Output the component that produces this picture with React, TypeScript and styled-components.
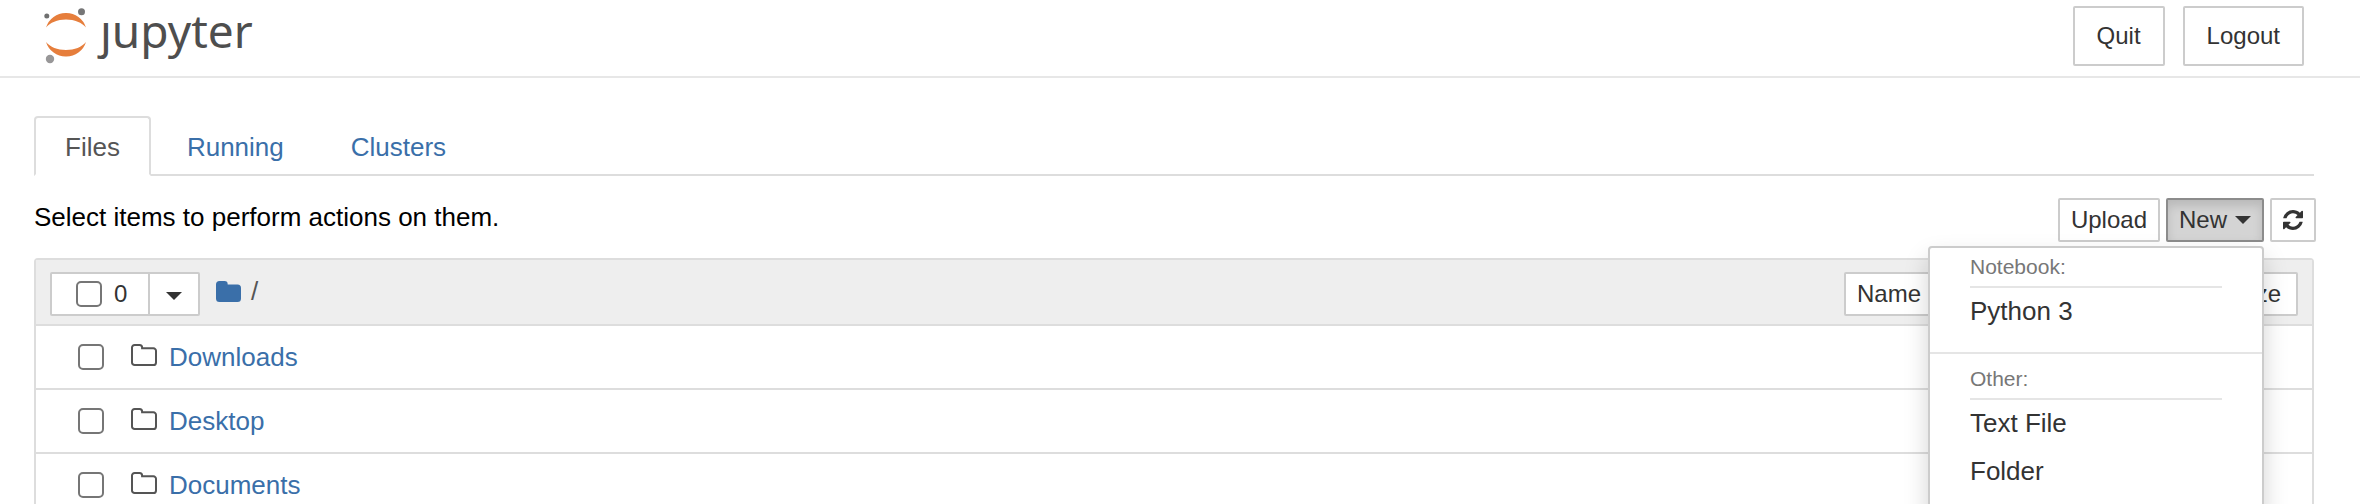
import React from "react";
import styled, { createGlobalStyle } from "styled-components";

const GlobalStyle = createGlobalStyle`
  *, *::before, *::after { box-sizing: border-box; }
  body {
    margin: 0;
    background: #fff;
    color: #000;
    font: 26px/36px "Liberation Sans", Arial, sans-serif;
  }
  button, input { font-family: inherit; margin: 0; }
`;

const Page = styled.div`
  height: 100vh;
  overflow: hidden;
`;

const Header = styled.header`
  display: flex;
  align-items: flex-start;
  justify-content: space-between;
  height: 78px;
  padding: 6px 56px 0 42px;
  border-bottom: 2px solid #e7e7e7;
`;

const Brand = styled.a`
  display: flex;
  align-items: flex-start;
  gap: 14px;
  color: #4e4e4e;
  text-decoration: none;
`;

const Wordmark = styled.span`
  font: 46px/48px "Noto Sans", sans-serif;
`;

const HeaderActions = styled.div`
  display: flex;
  gap: 18px;
`;

const Button = styled.button<{ $size?: "large" | "small"; $active?: boolean }>`
  display: flex;
  align-items: center;
  justify-content: center;
  gap: 8px;
  height: ${(p) => (p.$size === "large" ? 60 : 44)}px;
  padding: 0 ${(p) => (p.$size === "large" ? 22 : 11)}px;
  border: 2px solid ${(p) => (p.$active ? "#8c8c8c" : "#ccc")};
  border-radius: 2px;
  background: ${(p) => (p.$active ? "#d4d4d4" : "#fff")};
  box-shadow: ${(p) => (p.$active ? "inset 0 6px 10px rgba(0, 0, 0, 0.125)" : "none")};
  color: #333;
  font-size: 24px;
  line-height: 36px;
  white-space: nowrap;
`;

const SortButton = styled(Button)`
  padding-right: 15px;
`;

const Main = styled.main`
  padding: 38px 46px 0 34px;
`;

const Tabs = styled.nav`
  display: flex;
  gap: 5px;
  height: 60px;
  border-bottom: 2px solid #ddd;
`;

const Tab = styled.a<{ $active?: boolean }>`
  height: 60px;
  padding: 11px 29px;
  border: 2px solid ${(p) => (p.$active ? "#ddd" : "transparent")};
  border-bottom-color: ${(p) => (p.$active ? "#fff" : "transparent")};
  border-radius: 4px 4px 0 0;
  background: ${(p) => (p.$active ? "#fff" : "transparent")};
  color: ${(p) => (p.$active ? "#555" : "#3a6fa9")};
  text-decoration: none;
`;

const Toolbar = styled.div`
  display: flex;
  justify-content: space-between;
  padding: 22px 0 16px;
`;

const Hint = styled.p`
  margin: 0;
  line-height: 38px;
`;

const ToolbarActions = styled.div`
  display: flex;
  gap: 6px;
  margin-right: -2px;
`;

const MenuAnchor = styled.div`
  position: relative;
`;

const Menu = styled.div`
  position: absolute;
  z-index: 10;
  top: 48px;
  right: 0;
  width: 336px;
  padding: 0 0 20px;
  border: 2px solid #ccc;
  border-radius: 4px;
  background: #fff;
  box-shadow: 0 12px 24px rgba(0, 0, 0, 0.175);
`;

const MenuGroup = styled.section`
  & + & {
    margin-top: 16px;
    padding-top: 6px;
    border-top: 2px solid #e5e5e5;
  }
`;

const MenuHeading = styled.h3`
  margin: 0 40px;
  padding: 4px 0;
  border-bottom: 2px solid #e5e5e5;
  color: #777;
  font-size: 21px;
  font-weight: 400;
  line-height: 30px;
`;

const MenuItem = styled.a`
  display: block;
  padding: 5px 40px 7px;
  color: #333;
  text-decoration: none;
`;

const FileList = styled.section`
  border: 2px solid #ddd;
  border-radius: 4px;
`;

const ListHeader = styled.div`
  display: flex;
  align-items: center;
  justify-content: space-between;
  height: 64px;
  padding: 4px 14px 0;
  background: #eee;
`;

const HeaderGroup = styled.div`
  display: flex;
  align-items: center;
`;

const SelectGroup = styled.div`
  display: flex;
  height: 44px;
  margin-right: 16px;
  border: 2px solid #ccc;
  border-radius: 2px;
  background: #fff;
`;

const SelectAll = styled.label`
  display: flex;
  align-items: center;
  gap: 12px;
  width: 96px;
  padding-left: 24px;
  color: #333;
  font-size: 24px;
`;

const SelectToggle = styled.button`
  display: flex;
  align-items: center;
  justify-content: center;
  width: 50px;
  padding: 4px 0 0;
  border: 0;
  border-left: 2px solid #ccc;
  background: transparent;
`;

const Caret = styled.span`
  border: 8px solid transparent;
  border-top-color: #333;
  border-bottom: 0;
`;

const Checkbox = styled.input.attrs({ type: "checkbox" })`
  appearance: none;
  flex: none;
  width: 26px;
  height: 26px;
  border: 2px solid #767676;
  border-radius: 5px;
  background: #fff;
`;

const Crumbs = styled.nav`
  display: flex;
  align-items: center;
  gap: 10px;
  padding-bottom: 6px;
  color: #555;
`;

const CrumbLink = styled.a`
  display: flex;
`;

const SortControls = styled.div`
  display: flex;
  justify-content: space-between;
  width: 454px;
`;

const Row = styled.div`
  display: flex;
  align-items: center;
  height: 64px;
  padding: 0 42px;
  border-top: 2px solid #ddd;
`;

const RowIcon = styled.span`
  display: flex;
  margin: 0 12px 4px 27px;
`;

const RowLink = styled.a`
  color: #3a6fa9;
  text-decoration: none;
`;

const JupyterMark = () => (
  <svg width="44" height="60" viewBox="0 0 44 60" aria-hidden="true">
    <path d="M4 21.5A20.5 20.5 0 0 1 24 7a20.5 20.5 0 0 1 20 14.5C40 16.500 32.500 13.500 24 13.500S8 16.500 4 21.500Z" fill="#e67e3c" />
    <path d="M4 36A20.500 20.500 0 0 0 24 50.500 20.500 20.500 0 0 0 44 36C40 41 32.500 44 24 44S8 41 4 36Z" fill="#e67e3c" />
    <circle cx="39.500" cy="5.700" r="3.500" fill="#767677" />
    <circle cx="4.800" cy="10" r="2.500" fill="#6f7070" />
    <circle cx="8" cy="53" r="4.200" fill="#989798" />
  </svg>
);

const FolderSolid = () => (
  <svg width="25" height="21" viewBox="0 0 25 21" aria-hidden="true">
    <path d="M3.500 0h5a3.200 3.200 0 0 1 3.200 3.200V3.500h9.800A3.500 3.500 0 0 1 25 7v10.500a3.500 3.500 0 0 1-3.500 3.500h-18A3.500 3.500 0 0 1 0 17.500v-14A3.500 3.500 0 0 1 3.500 0Z" fill="#3a6fa9" />
  </svg>
);

const FolderOutline = () => (
  <svg width="26" height="22" viewBox="0 0 26 22" aria-hidden="true">
    <path d="M3.600 1h5a2.500 2.500 0 0 1 2.500 2.500V4.300h11.300A2.600 2.600 0 0 1 25 7v11.400a2.600 2.600 0 0 1-2.600 2.600H3.600A2.600 2.600 0 0 1 1 18.400V3.600A2.600 2.600 0 0 1 3.600 1Z" fill="none" stroke="#555" strokeWidth="2" />
  </svg>
);

const RefreshIcon = () => (
  <svg width="20" height="20" viewBox="0 0 1536 1536" aria-hidden="true">
    <path
      fill="#333"
      d="M1511 928q0 5-1 7-64 268-268 434.500T764 1536q-146 0-282.500-55T238 1324l-129 129q-19 19-45 19t-45-19-19-45V960q0-26 19-45t45-19h448q26 0 45 19t19 45-19 45l-137 137q71 66 161 102t187 36q134 0 250-65t186-179q11-17 53-117 8-23 30-23h192q13 0 22.500 9.500t9.500 22.500zm25-800v448q0 26-19 45t-45 19h-448q-26 0-45-19t-19-45 19-45l138-138Q969 256 768 256q-134 0-250 65T332 500q-11 17-53 117-8 23-30 23H50q-13 0-22.500-9.500T18 608v-7q65-268 270-434.500T768 0q146 0 284 55.500T1297 212l130-129q19-19 45-19t45 19 19 45z"
    />
  </svg>
);

const folders = ["Downloads", "Desktop", "Documents"];

export default function App() {
  return (
    <Page>
      <GlobalStyle />
      <Header>
        <Brand href="#" aria-label="jupyter">
          <JupyterMark />
          <Wordmark>ȷupyter</Wordmark>
        </Brand>
        <HeaderActions>
          <Button $size="large">Quit</Button>
          <Button $size="large">Logout</Button>
        </HeaderActions>
      </Header>
      <Main>
        <Tabs>
          <Tab href="#files" $active>Files</Tab>
          <Tab href="#running">Running</Tab>
          <Tab href="#clusters">Clusters</Tab>
        </Tabs>
        <Toolbar>
          <Hint>Select items to perform actions on them.</Hint>
          <ToolbarActions>
            <Button>Upload</Button>
            <MenuAnchor>
              <Button $active aria-haspopup="true" aria-expanded="true">
                New
                <Caret />
              </Button>
              <Menu>
                <MenuGroup>
                  <MenuHeading>Notebook:</MenuHeading>
                  <MenuItem href="#python3">Python 3</MenuItem>
                </MenuGroup>
                <MenuGroup>
                  <MenuHeading>Other:</MenuHeading>
                  <MenuItem href="#text">Text File</MenuItem>
                  <MenuItem href="#folder">Folder</MenuItem>
                </MenuGroup>
              </Menu>
            </MenuAnchor>
            <Button aria-label="Refresh">
              <RefreshIcon />
            </Button>
          </ToolbarActions>
        </Toolbar>
        <FileList>
          <ListHeader>
            <HeaderGroup>
              <SelectGroup>
                <SelectAll>
                  <Checkbox />0
                </SelectAll>
                <SelectToggle aria-label="Select by type">
                  <Caret />
                </SelectToggle>
              </SelectGroup>
              <Crumbs>
                <CrumbLink href="#root" aria-label="Home folder">
                  <FolderSolid />
                </CrumbLink>
                /
              </Crumbs>
            </HeaderGroup>
            <SortControls>
              <SortButton>Name</SortButton>
              <SortButton>File size</SortButton>
            </SortControls>
          </ListHeader>
          {folders.map((name) => (
            <Row key={name}>
              <Checkbox aria-label={`Select ${name}`} />
              <RowIcon>
                <FolderOutline />
              </RowIcon>
              <RowLink href={`#${name}`}>{name}</RowLink>
            </Row>
          ))}
        </FileList>
      </Main>
    </Page>
  );
}
